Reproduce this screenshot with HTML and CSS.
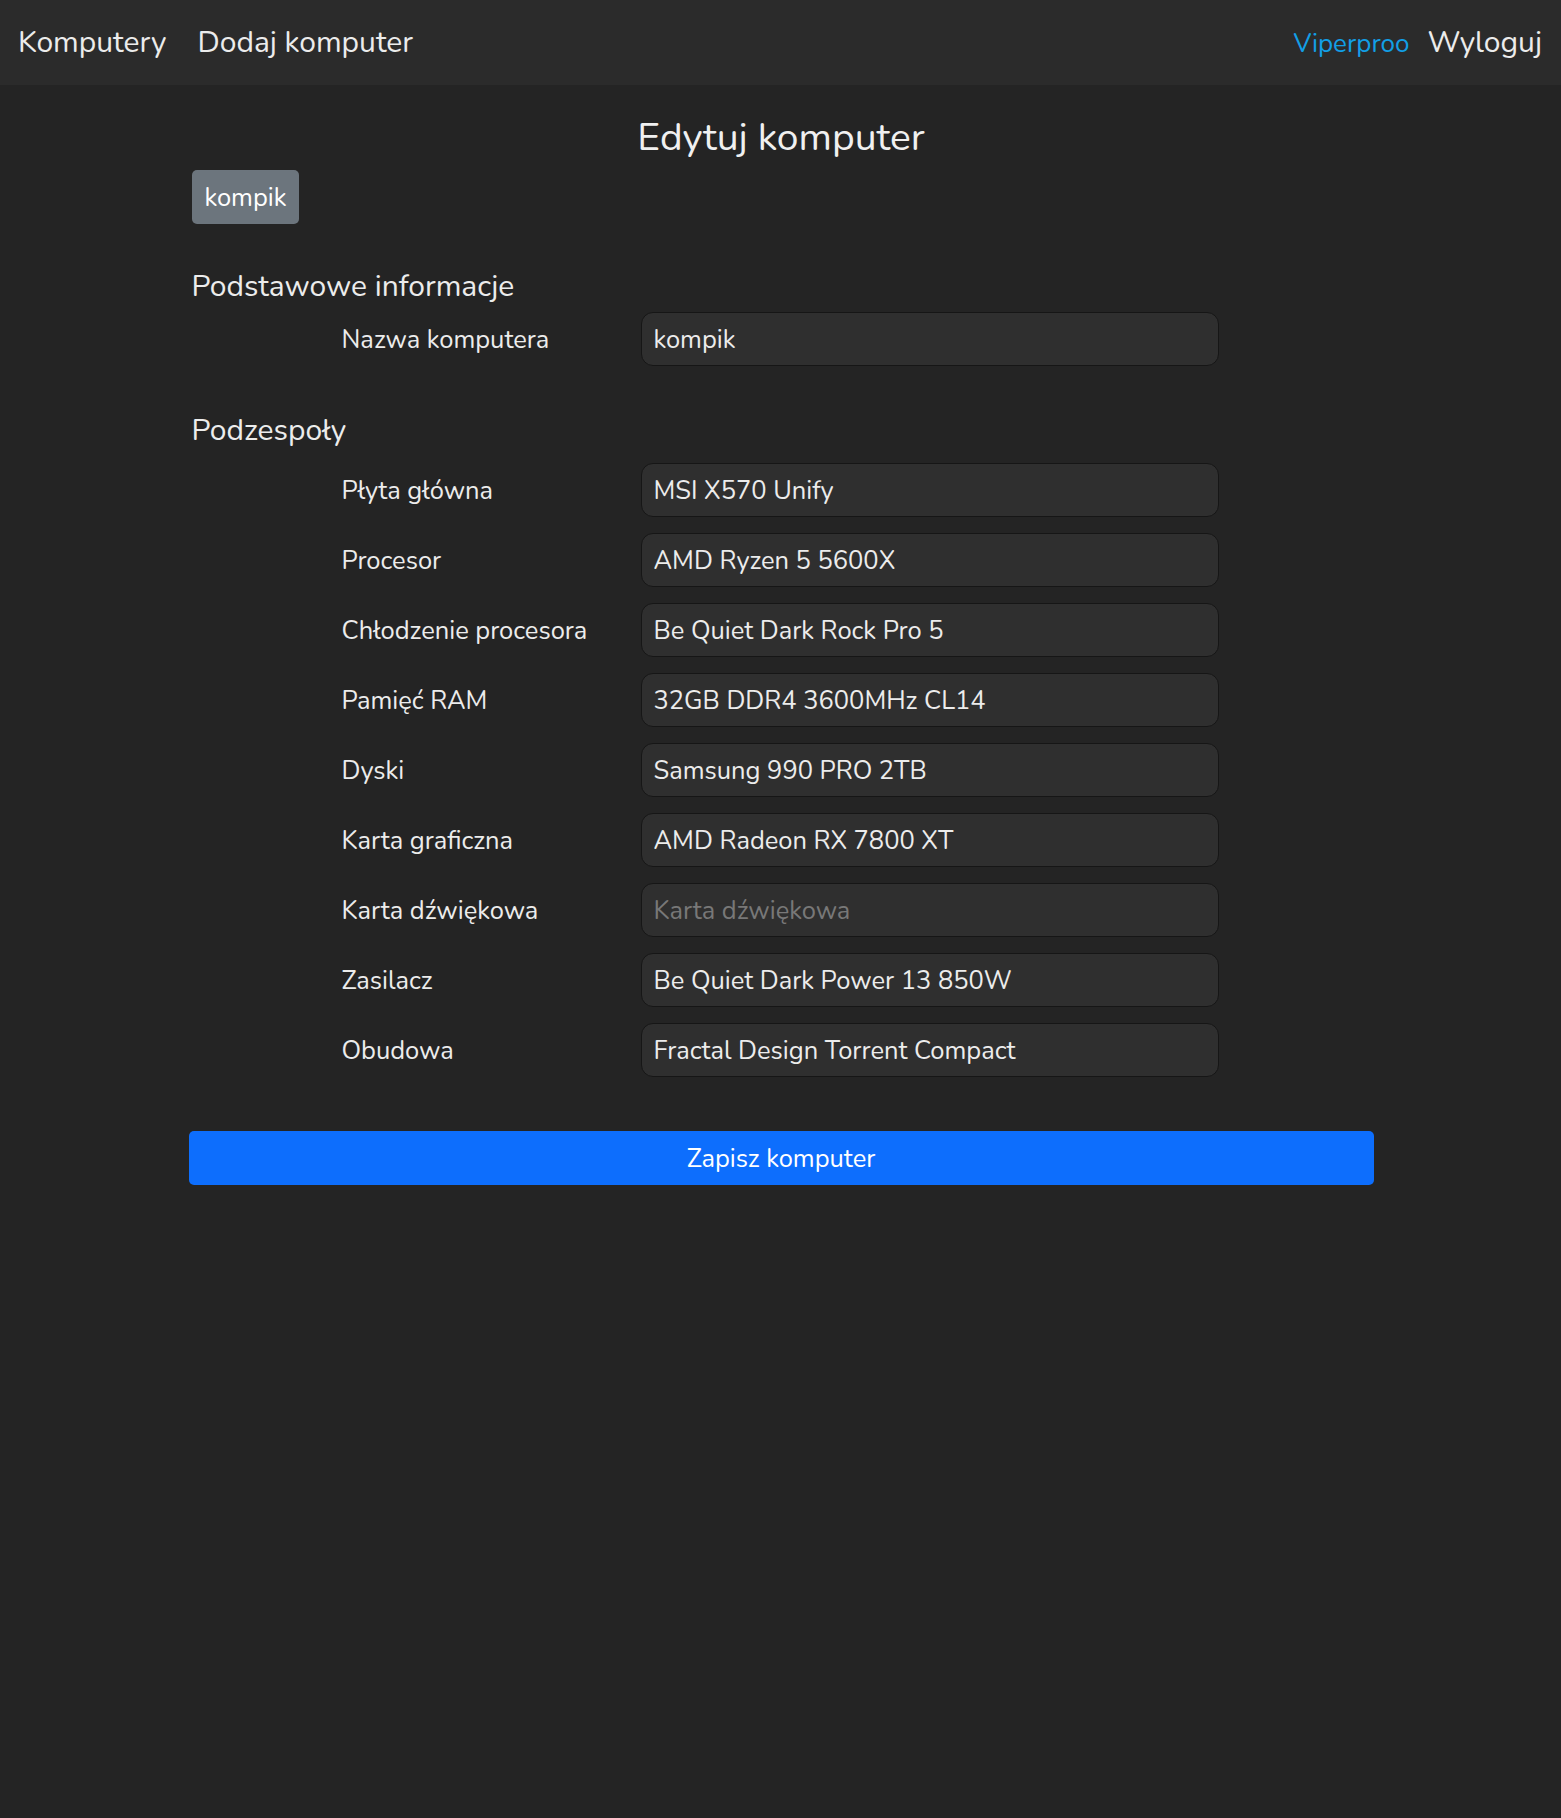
FILE: index.html
```html
<!DOCTYPE html>
<html lang="pl">
<head>
<meta charset="utf-8">
<title>Edytuj komputer</title>
<link rel="stylesheet" href="styles.css">
</head>
<body>
<nav class="navbar">
  <div class="nav-left">
    <a class="nav-link" href="#">Komputery</a>
    <a class="nav-link" href="#">Dodaj komputer</a>
  </div>
  <div class="nav-right">
    <a class="nav-user" href="#">Viperproo</a>
    <a class="nav-link" href="#">Wyloguj</a>
  </div>
</nav>
<main class="page">
  <h1 class="title">Edytuj komputer</h1>
  <div class="badge-row"><span class="badge">kompik</span></div>

  <h2 class="section-title first">Podstawowe informacje</h2>
  <div class="rows rows-first">
    <div class="row"><label class="label">Nazwa komputera</label><input class="input" value="kompik"></div>
  </div>

  <h2 class="section-title second">Podzespoły</h2>
  <div class="rows rows-second">
    <div class="row"><label class="label">Płyta główna</label><input class="input" value="MSI X570 Unify"></div>
    <div class="row"><label class="label">Procesor</label><input class="input" value="AMD Ryzen 5 5600X"></div>
    <div class="row"><label class="label">Chłodzenie procesora</label><input class="input" value="Be Quiet Dark Rock Pro 5"></div>
    <div class="row"><label class="label">Pamięć RAM</label><input class="input" value="32GB DDR4 3600MHz CL14"></div>
    <div class="row"><label class="label">Dyski</label><input class="input" value="Samsung 990 PRO 2TB"></div>
    <div class="row"><label class="label">Karta graficzna</label><input class="input" value="AMD Radeon RX 7800 XT"></div>
    <div class="row"><label class="label">Karta dźwiękowa</label><input class="input" placeholder="Karta dźwiękowa"></div>
    <div class="row"><label class="label">Zasilacz</label><input class="input" value="Be Quiet Dark Power 13 850W"></div>
    <div class="row"><label class="label">Obudowa</label><input class="input" value="Fractal Design Torrent Compact"></div>
  </div>

  <button class="save" type="button">Zapisz komputer</button>
</main>
</body>
</html>
```
FILE: styles.css
```css
html, body {
  margin: 0;
  padding: 0;
}
body {
  background: #242424;
  color: #ececec;
  font-family: "Nunito", Lato, "Open Sans", sans-serif;
  min-height: 1818px;
}
a { text-decoration: none; }

.navbar {
  height: 85px;
  background: #2b2b2b;
  display: flex;
  align-items: center;
  justify-content: space-between;
  padding: 0 19px 0 18px;
  box-sizing: border-box;
}
.nav-left, .nav-right {
  display: flex;
  align-items: center;
}
.nav-left { gap: 31px; }
.nav-right { gap: 18px; }
.nav-link {
  color: #ececec;
  font-size: 30px;
  line-height: 36px;
}
.nav-user {
  color: #129fe6;
  font-size: 26px;
  line-height: 36px;
  padding-top: 2px;
}

.page {
  width: 1186px;
  margin: 0 auto;
  padding-left: 1px;
  box-sizing: border-box;
}
.title {
  margin: 29px 0 0;
  font-weight: 400;
  font-size: 39px;
  line-height: 48px;
  text-align: center;
  color: #f0f0f0;
}
.badge-row {
  margin-top: 8px;
  padding-left: 3px;
}
.badge {
  display: inline-flex;
  align-items: center;
  height: 54px;
  padding: 0 13px;
  box-sizing: border-box;
  background: #6c757d;
  color: #fff;
  border-radius: 5px;
  font-size: 25.5px;
}
.section-title {
  margin: 0;
  padding-left: 3px;
  font-weight: 400;
  font-size: 30px;
  line-height: 36px;
  color: #ececec;
}
.section-title.first { margin-top: 45px; }
.section-title.second { margin-top: 47px; }
.rows {
  display: flex;
  flex-direction: column;
  gap: 16px;
}
.rows-first { margin-top: 7px; }
.rows-second { margin-top: 14px; }
.row {
  display: flex;
  align-items: center;
  height: 54px;
  padding-left: 153px;
}
.label {
  width: 299px;
  font-size: 25.5px;
  color: #ececec;
}
.input {
  width: 578px;
  height: 54px;
  box-sizing: border-box;
  background: #2f2f2f;
  border: 1px solid #161616;
  border-radius: 12px;
  padding: 0 12px;
  color: #ececec;
  font-family: inherit;
  font-size: 25.5px;
  outline: none;
}
.input::placeholder {
  color: #787878;
}
.save {
  display: block;
  width: 1185px;
  height: 54px;
  margin-top: 54px;
  background: #0d6efd;
  border: none;
  border-radius: 5px;
  color: #fff;
  font-family: inherit;
  font-size: 25.5px;
  cursor: pointer;
}
```
